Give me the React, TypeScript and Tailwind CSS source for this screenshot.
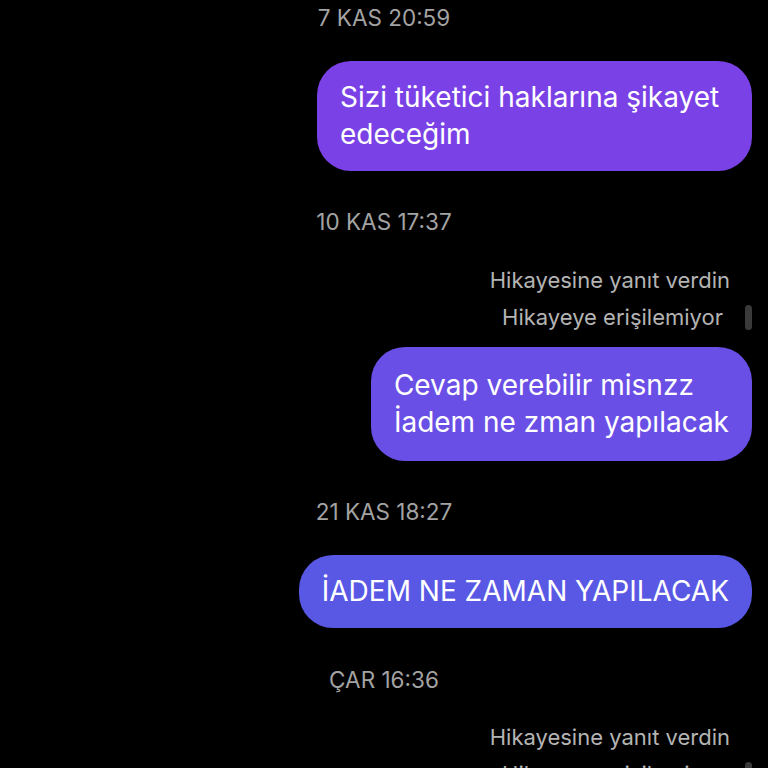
import React from "react";

const Stamp: React.FC<{ text: string; className?: string }> = ({ text, className = "" }) => (
  <div className={`text-center text-[22.5px] leading-[28px] text-[#a3a3a3] ${className}`}>{text}</div>
);

const StoryReply: React.FC<{ className?: string }> = ({ className = "" }) => (
  <div className={`flex flex-col items-end pr-[16px] text-[22px] leading-[28px] text-[#b4b4b4] ${className}`}>
    <div className="pr-[22px]">Hikayesine yanıt verdin</div>
    <div className="mt-[9px] flex items-center gap-[22px]">
      <span>Hikayeye erişilemiyor</span>
      <span className="h-[25px] w-[7px] rounded-full bg-[#3a3a3a]" />
    </div>
  </div>
);

const Bubble: React.FC<{ lines: string[]; color: string; className?: string }> = ({ lines, color, className = "" }) => (
  <div className={`flex justify-end pr-[16px] ${className}`}>
    <div className={`rounded-[34px] pl-[23px] text-[28px] leading-[37px] text-white ${color}`}>
      {lines.map((l) => (
        <div key={l}>{l}</div>
      ))}
    </div>
  </div>
);

export default function App() {
  return (
    <div
      className="h-[768px] w-[768px] overflow-hidden bg-black"
      style={{ fontFamily: "Inter, 'Noto Sans', sans-serif" }}
    >
      <Stamp text="7 KAS 20:59" className="pt-[4px]" />
      <Bubble
        lines={["Sizi tüketici haklarına şikayet", "edeceğim"]}
        color="w-[435px] bg-[#7a42e6] py-[18px] pr-[23px]"
        className="mt-[29px]"
      />
      <Stamp text="10 KAS 17:37" className="mt-[37px]" />
      <StoryReply className="mt-[30px]" />
      <Bubble
        lines={["Cevap verebilir misnzz", "İadem ne zman yapılacak"]}
        color="bg-[#6a4fe6] py-[20px] pr-[23px]"
        className="mt-[16px]"
      />
      <Stamp text="21 KAS 18:27" className="mt-[37px]" />
      <Bubble lines={["İADEM NE ZAMAN YAPILACAK"]} color="bg-[#5858e4] py-[18px] pr-[23px]" className="mt-[29px]" />
      <Stamp text="ÇAR 16:36" className="mt-[38px]" />
      <StoryReply className="mt-[29px]" />
    </div>
  );
}
